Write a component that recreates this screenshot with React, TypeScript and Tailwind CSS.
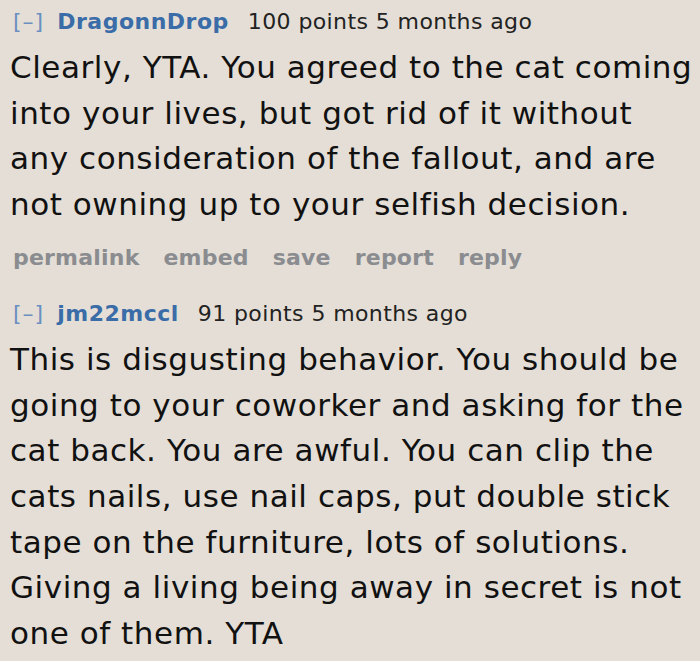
const comments = [
  {
    user: "DragonnDrop",
    points: "100 points",
    age: "5 months ago",
    lines: [
      "Clearly, YTA. You agreed to the cat coming",
      "into your lives, but got rid of it without",
      "any consideration of the fallout, and are",
      "not owning up to your selfish decision.",
    ],
    actions: true,
  },
  {
    user: "jm22mccl",
    points: "91 points",
    age: "5 months ago",
    lines: [
      "This is disgusting behavior. You should be",
      "going to your coworker and asking for the",
      "cat back. You are awful. You can clip the",
      "cats nails, use nail caps, put double stick",
      "tape on the furniture, lots of solutions.",
      "Giving a living being away in secret is not",
      "one of them. YTA",
    ],
    actions: false,
  },
];

export default function App() {
  return (
    <div className="w-[700px] h-[661px] overflow-hidden bg-[#e4ded6] font-['DejaVu_Sans',Verdana,sans-serif] pl-[10px]">
      {comments.map((c, i) => (
        <div key={c.user} className={i === 0 ? "pt-[5px]" : "pt-[14px]"}>
          <div className="flex items-baseline h-[30px] whitespace-nowrap">
            <span className="ml-[3px] text-[22px] tracking-[1px] text-[#6a8fc0]">[–]</span>
            <span className="ml-[13px] text-[22px] tracking-[0.5px] font-bold text-[#3a6ca8]">{c.user}</span>
            <span className="ml-[19px] text-[22px] tracking-[0.4px] text-[#222]">
              {c.points} {c.age}
            </span>
          </div>
          <div className="mt-[10px] text-[31px] tracking-[0.55px] leading-[45.7px] text-[#111] whitespace-nowrap">
            {c.lines.map((l) => (
              <div key={l}>{l}</div>
            ))}
          </div>
          {c.actions && (
            <div className="flex gap-[24px] pl-[3px] mt-[13px] h-[42px] text-[22px] tracking-[0.2px] font-bold text-[#8a8c90]">
              <span>permalink</span>
              <span>embed</span>
              <span>save</span>
              <span>report</span>
              <span>reply</span>
            </div>
          )}
        </div>
      ))}
    </div>
  );
}
